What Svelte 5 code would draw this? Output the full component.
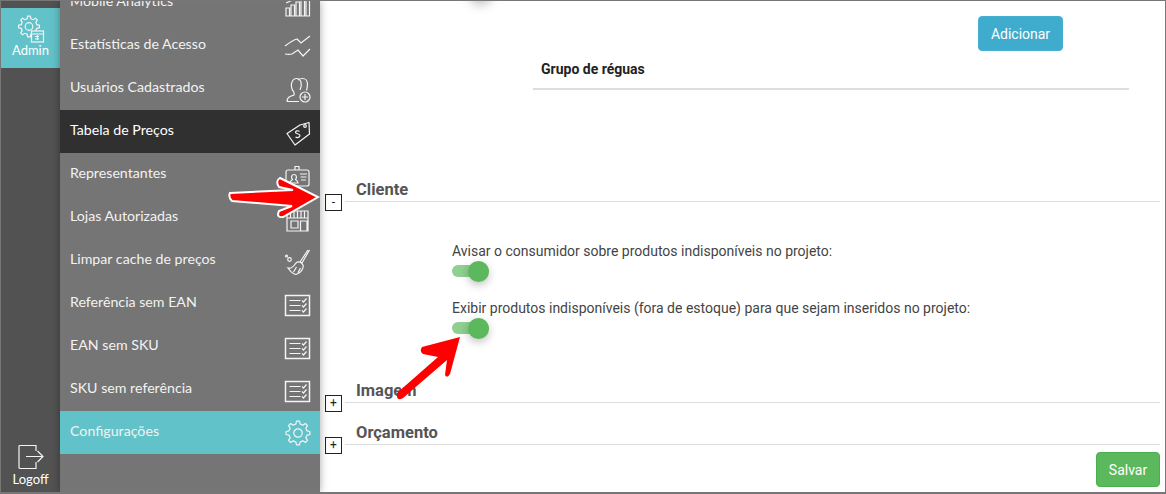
<script lang="ts">
  // gear outline shared by the Admin and Configurações icons
  function gear(cx: number, cy: number, outer: number, inner: number, teeth: number) {
    const pts: string[] = []
    const step = (Math.PI * 2) / teeth
    for (let i = 0; i < teeth; i++) {
      const a = i * step - Math.PI / 2
      const corners = [
        [inner, a - step * 0.3],
        [outer, a - step * 0.16],
        [outer, a + step * 0.16],
        [inner, a + step * 0.3],
      ]
      for (const [r, t] of corners) {
        pts.push(`${(cx + r * Math.cos(t)).toFixed(2)} ${(cy + r * Math.sin(t)).toFixed(2)}`)
      }
    }
    return 'M' + pts.join('L') + 'Z'
  }

  const menuGear = gear(14, 13, 12, 9.2, 8)
  const adminGear = gear(11, 11.5, 10.5, 8, 8)

  const items = [
    { label: 'Mobile Analytics', icon: 'bars' },
    { label: 'Estatísticas de Acesso', icon: 'lines' },
    { label: 'Usuários Cadastrados', icon: 'user' },
    { label: 'Tabela de Preços', icon: 'tag', dark: true },
    { label: 'Representantes', icon: 'badge' },
    { label: 'Lojas Autorizadas', icon: 'store' },
    { label: 'Limpar cache de preços', icon: 'broom' },
    { label: 'Referência sem EAN', icon: 'list' },
    { label: 'EAN sem SKU', icon: 'list' },
    { label: 'SKU sem referência', icon: 'list' },
    { label: 'Configurações', icon: 'gear', teal: true },
  ]

  const options = [
    'Avisar o consumidor sobre produtos indisponíveis no projeto:',
    'Exibir produtos indisponíveis (fora de estoque) para que sejam inseridos no projeto:',
  ]
</script>

<div class="frame">
  <nav class="rail">
    <div class="tile">
      <svg viewBox="0 0 26 28" width="26" height="28" class="ico">
        <path d={adminGear} />
        <circle cx="11" cy="11.500" r="3.800" />
        <rect x="13.500" y="16" width="12" height="11" fill="#62c2c9" />
        <path d="M13.500 19h12M17 21.500h4M17 24h4M19.500 20v5" />
      </svg>
      <span>Admin</span>
    </div>
    <div class="logoff">
      <svg viewBox="0 0 26 26" width="26" height="26" class="ico">
        <path d="M18 7V1.500H2a1 1 0 0 0-1 1v21a1 1 0 0 0 1 1h16V18" />
        <path d="M8 12.500h17M19.500 7l5.500 5.500L19.500 18" />
      </svg>
      <span>Logoff</span>
    </div>
  </nav>

  <aside class="menu">
    {#each items as item}
      <div class="item" class:dark={item.dark} class:teal={item.teal}>
        <span>{item.label}</span>
        <svg viewBox="0 0 26 26" width="26" height="26" class="ico">
          {#if item.icon === 'bars'}
            <path d="M2 18h3.500v8H2zM7 15h3.500v11H7zM12 12h3.500v14H12zM17 8h3.500v18H17zM22 5h3.500v21H22zM2 26h23.500M2 13c3-1 6-3 9-4.500" />
          {:else if item.icon === 'lines'}
            <path d="M1 13c4-3 8-6 12-7l4 4 9-7M1 21c3 .5 5 .5 7 0l6-4 5 6 7-7" />
          {:else if item.icon === 'user'}
            <path d="M3 25.500c0-3 1-4 3-5l4-1.500c.5-1.500.5-2-.5-3.500C7 13 7 8 8 6c1-2.500 3-3.500 4.500-3.500 2 0 3.500 1 4.500 3.500 .5 2 .5 5-1 8M3 25.500h12" />
            <path d="M14 4c1-1 3-1.500 4.500-1.500 3 0 5 2.500 5 6 0 2-.5 4-1 6" />
            <circle cx="21" cy="21" r="5" />
            <path d="M21 18v6M18 21h6" />
          {:else if item.icon === 'tag'}
            <path d="M3 14.500 16 6l9-2.500.5 11.500L11 26z" stroke-linejoin="round" />
            <circle cx="21" cy="7" r="1.300" />
            <path d="M15.500 12.500c-2-1.500-4-.5-4 1s4.500 1 4.500 3-3 2.500-4.500 1.500" />
          {:else if item.icon === 'badge'}
            <rect x="2" y="8" width="23" height="16" rx="2" />
            <path d="M11 8V4.500h4V8M6 21c0-2.500 1.500-2.500 2.500-3.500-2-2.500-.5-5 1.500-5s3.500 2.500 1.500 5c1 1 2.500 1 2.500 3.500zM16 12h7M16.500 15h6M17 18h5" />
          {:else if item.icon === 'store'}
            <path d="M3 13h21v13H3zM3 13V6h21v7M6.500 6v7M10 6v7M13.500 6v7M17 6v7M20.500 6v7M7 16h7v7H7zM16.500 26V16H23v10" />
          {:else if item.icon === 'broom'}
            <path d="M25.500 2 18 15M24 2l-8 12M12 15c2-2 5-1.500 7 2 1 3-2 8-7 9.500-2-.5-6-3.500-8-6.500 3 1 6-2 8-5zM9.500 24l3-5M14 24.500l2.500-4.500" />
            <circle cx="2.500" cy="8" r="1" />
            <circle cx="5.500" cy="11.500" r="1.800" />
          {:else if item.icon === 'list'}
            <rect x="1.500" y="4.500" width="24" height="20" stroke-width="1.500" />
            <path d="M5.500 9.500h11M5.500 14.500h11M5.500 19.500h11M18 9.500l1.500 1.500 3-3.500M18 14.500l1.500 1.500 3-3.500M18 19.500l1.500 1.500 3-3.500" />
          {:else}
            <path d={menuGear} stroke-linejoin="round" />
            <circle cx="14" cy="13" r="4.200" />
          {/if}
        </svg>
      </div>
    {/each}
  </aside>

  <main class="content">
    <div class="stray"></div>
    <div class="toolbar"><button class="btn add">Adicionar</button></div>
    <div class="rules">Grupo de réguas</div>

    <section class="first">
      <header>
        <span class="box">-</span>
        <h2>Cliente</h2>
      </header>
      <div class="options">
        {#each options as text}
          <label>{text}</label>
          <div class="toggle"><i></i></div>
        {/each}
      </div>
    </section>

    <section class="second">
      <header>
        <span class="box">+</span>
        <h2>Imagem</h2>
      </header>
    </section>
    <section class="third">
      <header>
        <span class="box">+</span>
        <h2>Orçamento</h2>
      </header>
    </section>

    <div class="footer"><button class="btn save">Salvar</button></div>
  </main>

  <!-- red annotation arrows drawn over the screenshot -->
  <svg class="notes" viewBox="0 0 1166 494" width="1166" height="494">
    <path
      class="halo"
      d="M230 193 L293 190 L279 187 Q275 181 280 178 L318 197 L283 217 Q276 218 279 211 L292 206 L232 201 Q228 197 230 193Z"
    />
    <path
      class="red"
      d="M397 393 L438 357 L423 354 Q419 351 422 347 L460 337 L450 374 Q447 379 445 375 L447 360 L403 398 Q398 401 397 397Z"
    />
  </svg>
</div>

<style>
  :global(body) {
    margin: 0;
  }

  .frame {
    position: relative;
    display: flex;
    box-sizing: border-box;
    width: 1166px;
    height: 494px;
    border: 1px solid #777;
    border-bottom-width: 2px;
    overflow: hidden;
    background: #fff;
  }

  .rail {
    display: flex;
    flex-direction: column;
    justify-content: space-between;
    flex: none;
    width: 59px;
    padding-top: 7px;
    background: #525252;
    color: #fff;
    font: 13px Lato, sans-serif;
  }

  .tile,
  .logoff {
    display: flex;
    flex-direction: column;
    align-items: center;
  }

  .tile {
    height: 60px;
    padding-top: 7px;
    box-sizing: border-box;
    background: #62c2c9;
  }

  .tile span {
    margin-top: -1px;
  }

  .logoff {
    padding-bottom: 5px;
  }

  .logoff span {
    margin-top: 1px;
  }

  .ico {
    flex: none;
    fill: none;
    stroke: #f4f4f4;
    stroke-width: 1.2;
    overflow: visible;
  }

  .menu {
    position: relative;
    z-index: 1;
    flex: none;
    width: 260px;
    background: #757575;
    box-shadow: 0 0 8px rgba(0, 0, 0, 0.35);
    overflow: hidden;
  }

  .item {
    display: flex;
    align-items: center;
    justify-content: space-between;
    height: 43px;
    padding: 0 10px;
    color: #f2f2f2;
    font: 14.200px Lato, sans-serif;
    transform: translateY(-20px);
  }

  .item span {
    position: relative;
    top: -2px;
  }

  .dark {
    background: #303030;
    color: #fff;
  }

  .teal {
    background: #62c2c9;
  }

  .content {
    flex: 1;
    min-width: 0;
    font-family: Roboto, sans-serif;
    color: #333;
  }

  /* shadow of a switch scrolled out of view */
  .stray {
    width: 21px;
    height: 21px;
    margin: -21px 0 0 150px;
    border-radius: 50%;
    box-shadow: 0 3px 12px rgba(0, 0, 0, 0.3);
  }

  .toolbar {
    display: flex;
    justify-content: flex-end;
    padding: 15px 102px 0 0;
  }

  .btn {
    height: 35px;
    border: 1px solid transparent;
    border-radius: 4px;
    color: #fff;
    font: 14px Roboto, sans-serif;
  }

  .add {
    width: 85px;
    background: #3fabcd;
    border-color: #46b0d0;
  }

  .save {
    width: 64px;
    background: #5cb85c;
    border-color: #4cae4c;
  }

  .rules {
    box-sizing: border-box;
    width: 596px;
    height: 39px;
    margin-left: 213px;
    padding: 8px 8px 0;
    border-bottom: 2px solid #ddd;
    color: #222;
    font-size: 14px;
    font-weight: 700;
    line-height: 20px;
  }

  section header {
    display: flex;
    margin: 0 5px 0 5px;
    height: 22px;
  }

  .first {
    margin-top: 90px;
  }

  .second {
    margin-top: 47px;
  }

  .third {
    margin-top: 20px;
  }

  .box {
    flex: none;
    box-sizing: border-box;
    width: 17px;
    height: 17px;
    margin: 14px 3px 0 0;
    border: 1px solid #222;
    background: #fff;
    color: #222;
    font-size: 12px;
    line-height: 14px;
    text-align: center;
  }

  h2 {
    flex: 1;
    box-sizing: border-box;
    height: 22px;
    margin: 0;
    padding-left: 11px;
    border-bottom: 1px solid #ddd;
    color: #555;
    font-size: 16.500px;
    font-weight: 700;
    line-height: 20px;
  }

  .options {
    margin: 41px 0 0 132px;
  }

  label {
    display: block;
    height: 16px;
    color: #444;
    font-size: 14px;
    line-height: 16px;
  }

  .toggle {
    position: relative;
    width: 37px;
    height: 12px;
    margin: 6px 0 23px;
    border-radius: 6px;
    background: #8fcf8f;
  }

  .toggle:last-child {
    margin-bottom: 0;
  }

  .toggle i {
    position: absolute;
    top: -4.500px;
    right: 0;
    width: 21px;
    height: 21px;
    border-radius: 50%;
    background: #5cb85c;
    box-shadow: 0 3px 8px rgba(0, 0, 0, 0.25);
  }

  .footer {
    display: flex;
    justify-content: flex-end;
    padding: 7px 5px 0 0;
  }

  .notes {
    position: absolute;
    top: -1px;
    left: -1px;
    z-index: 2;
    pointer-events: none;
  }

  .halo {
    fill: #f00;
    stroke: #fff;
    stroke-width: 2;
  }

  .red {
    fill: #f00;
  }
</style>
